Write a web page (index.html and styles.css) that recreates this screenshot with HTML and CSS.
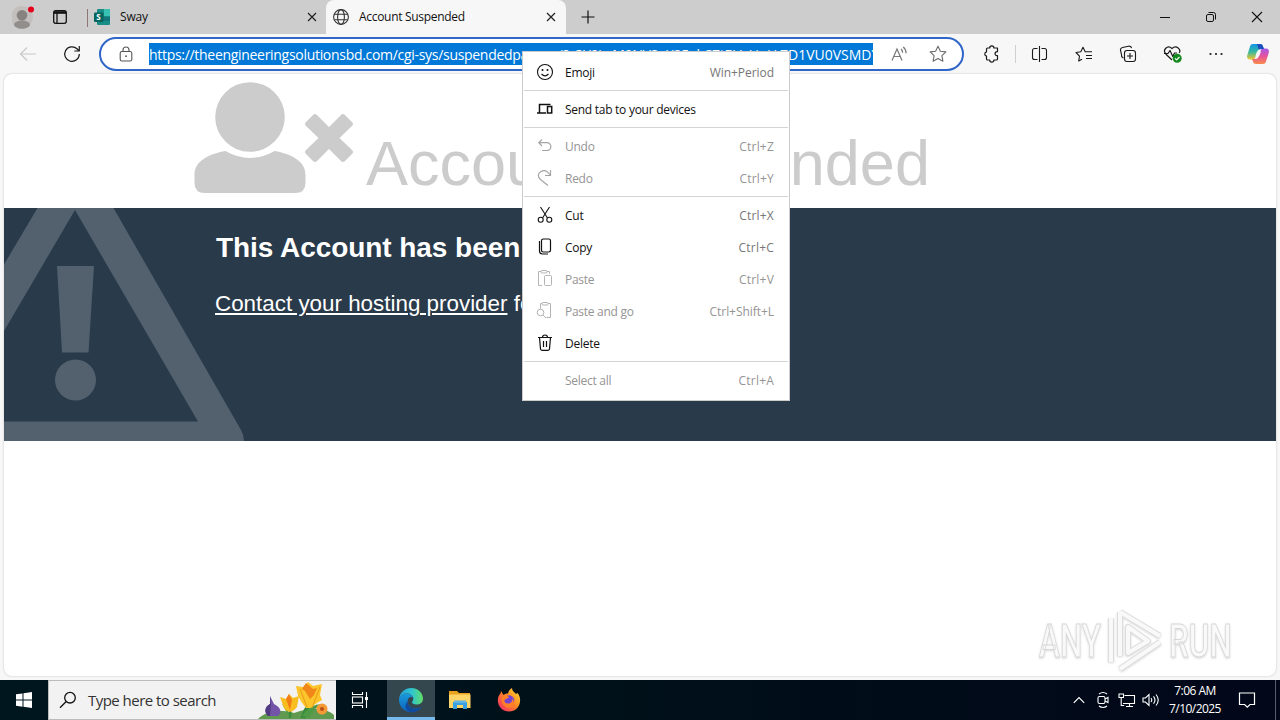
FILE: index.html
```html
<!DOCTYPE html>
<html lang="en">
<head>
<meta charset="utf-8">
<title>Account Suspended</title>
<link rel="stylesheet" href="styles.css">
</head>
<body>
<div class="tabstrip">
  <div class="profile"><svg width="24" height="28" viewBox="0 0 24 28"><circle cx="10" cy="15" r="11" fill="#c2bfbd"/><circle cx="10" cy="13.300" r="5.300" fill="#858280"/><path d="M2 23c0-6 16-6 16 0-2 5-14 5-16 0z" fill="#918e8c"/><circle cx="19" cy="7.500" r="3" fill="#e3001b"/></svg></div>
  <div class="tabactions"><svg width="16" height="16" viewBox="0 0 16 16" fill="none" stroke="#111" stroke-width="1.300"><rect x="1.700" y="1.700" width="12.600" height="12.600" rx="2"/><path d="M2 3.500h12" stroke-width="2.600"/><path d="M5 4v10"/></svg></div>
  <div class="tab tab-idle">
    <svg width="16" height="16" viewBox="0 0 16 16"><path d="M4 0h11a1 1 0 0 1 1 1v14a1 1 0 0 1-1 1H4a1 1 0 0 1-1-1V1a1 1 0 0 1 1-1z" fill="#178d86"/><path d="M10 0h5a1 1 0 0 1 1 1v6h-6z" fill="#39c2b4"/><path d="M3 8h13v4H3z" fill="#12777a"/><rect y="3.500" width="9.500" height="9.500" rx="1" fill="#06655f"/><text x="2.200" y="11.200" class="sway-letter">S</text></svg>
    <span class="tab-title">Sway</span>
    <svg class="close" width="10" height="10" viewBox="0 0 10 10"><path d="M1 1l8 8M9 1l-8 8" stroke="#222" stroke-width="1.200"/></svg>
  </div>
  <div class="tab tab-active">
    <svg width="16" height="16" viewBox="0 0 16 16" fill="none" stroke="#333" stroke-width="1.100"><circle cx="8" cy="8" r="7.400"/><ellipse cx="8" cy="8" rx="3.400" ry="7.400"/><path d="M1.300 5.200h13.400M1.300 10.800h13.400"/></svg>
    <span class="tab-title">Account Suspended</span>
    <svg class="close" width="10" height="10" viewBox="0 0 10 10"><path d="M1 1l8 8M9 1l-8 8" stroke="#222" stroke-width="1.200"/></svg>
  </div>
  <svg class="newtab" width="14" height="14" viewBox="0 0 14 14"><path d="M7 .5v13M.5 7h13" stroke="#111" stroke-width="1.200"/></svg>
  <div class="winctl">
    <span><svg width="12" height="12" viewBox="0 0 12 12"><path d="M1 6.500h10" stroke="#111"/></svg></span>
    <span><svg width="12" height="12" viewBox="0 0 12 12" fill="none" stroke="#111"><rect x="1.500" y="3.500" width="7" height="7" rx="1.500"/><path d="M3.500 1.500h5a2 2 0 0 1 2 2v5"/></svg></span>
    <span><svg width="12" height="12" viewBox="0 0 12 12"><path d="M1 1l10 10M11 1L1 11" stroke="#111" stroke-width="1.100"/></svg></span>
  </div>
</div>

<div class="toolbar">
  <div class="nav-back"><svg width="18" height="16" viewBox="0 0 18 16" fill="none" stroke="#c8c8c8" stroke-width="1.200"><path d="M17 8H1.500M8 1.500L1.500 8 8 14.500"/></svg></div>
  <div class="nav-reload"><svg width="18" height="18" viewBox="0 0 18 18" fill="none" stroke="#1a1a1a" stroke-width="1.200"><path d="M16.300 9A7.300 7.300 0 1 1 14 3.800L16 5.800M16.300 1v5h-5"/></svg></div>
  <div class="address">
    <svg class="lock" width="14" height="16" viewBox="0 0 14 16" fill="none" stroke="#555" stroke-width="1.100"><rect x="1.200" y="5.500" width="11.600" height="9.500" rx="1.800"/><path d="M4 5.500V4a3 3 0 0 1 6 0v1.500"/><circle cx="7" cy="10.200" r=".9" fill="#555" stroke="none"/></svg>
    <div class="url"><span class="url-head">https://theengineeringsolutionsbd.com/cgi-sys/suspendedpage.cgi?z3Y9IwM9NV8aX25ahSZtBVaUuUu</span><span class="url-tail">ZD1VU0VSMDY</span></div>
    <svg class="read" width="17" height="16" viewBox="0 0 17 16" fill="none" stroke="#777" stroke-width="1.200"><path d="M1 14.500L6 3l5 11.500M2.800 10.500h6.400M10 3c1.200 1 1.600 2.200 1.600 3.800M12.200 1c2 1.600 2.900 3.400 2.900 6.300"/></svg>
    <svg class="star" width="18" height="18" viewBox="0 0 18 18" fill="none" stroke="#6c6c6c" stroke-width="1.100" stroke-linejoin="round"><path d="M9 1.200l2.400 5 5.500.7-4 3.800 1 5.500L9 13.500l-4.900 2.700 1-5.500-4-3.800 5.500-.7z"/></svg>
  </div>
  <div class="tools">
    <span><svg class="puzzle" width="18" height="18" viewBox="0 0 18 18" fill="none" stroke="#1a1a1a" stroke-width="1.200" stroke-linejoin="round"><path d="M4.500 3h2.200a2 2 0 0 1 4.200 0h3.600v3.700c-3.300-.4-3.300 4.400 0 4V14a1 1 0 0 1-1 1h-2.600a2 2 0 0 1-4.200 0H4.500a1 1 0 0 1-1-1v-2.800a2.200 2.200 0 0 1 0-4.300V4a1 1 0 0 1 1-1z"/></svg></span>
    <i class="divider"></i>
    <span><svg width="18" height="18" viewBox="0 0 18 18" fill="none" stroke="#1a1a1a" stroke-width="1.100"><path d="M6.500 3.500h-3a2 2 0 0 0-2 2v7a2 2 0 0 0 2 2h3M10.500 3.500h3a2 2 0 0 1 2 2v7a2 2 0 0 1-2 2h-3M8.500 1v16"/></svg></span>
    <span><svg width="18" height="18" viewBox="0 0 18 18" fill="none" stroke="#1a1a1a" stroke-width="1.100" stroke-linejoin="round"><path d="M7 14.200L3.700 16l.8-4.900L1 7.500l4.800-.7L8 2.200l2.200 4.600H17M11 10.500h6M11 13.500h6"/></svg></span>
    <span><svg width="18" height="18" viewBox="0 0 18 18" fill="none" stroke="#1a1a1a" stroke-width="1.100"><path d="M4.500 13A2.500 2.500 0 0 1 2.600 10L1.500 5.500a2.500 2.500 0 0 1 2-3l6-1.300a2.500 2.500 0 0 1 3 2"/><rect x="5.500" y="5.500" width="11" height="11" rx="2.500"/><path d="M11 8v6M8 11h6"/></svg></span>
    <span><svg class="heart" width="20" height="18" viewBox="0 0 20 18" fill="none" stroke="#1a1a1a" stroke-width="1.200" stroke-linejoin="round"><path d="M9 15L3 9.200C-1 5 4.500-.5 9 3.500c4.500-4 9.500 1 7.200 4.500M1 8.500h4L7 5.500l2.800 6L11.500 8h2.500"/><circle cx="14.200" cy="13.200" r="4.500" fill="#138a20" stroke="none"/><path d="M12 13.300l1.600 1.600 2.900-3.100" stroke="#fff"/></svg></span>
    <span><svg width="16" height="4" viewBox="0 0 16 4" fill="#1a1a1a"><circle cx="2.500" cy="2" r="1.100"/><circle cx="8" cy="2" r="1.100"/><circle cx="13.500" cy="2" r="1.100"/></svg></span>
    <span class="copilot"><svg width="24" height="22" viewBox="0 0 24 22"><defs><linearGradient id="ca" x1="0" y1="0" x2="0" y2="1"><stop offset="0" stop-color="#1595e8"/><stop offset=".5" stop-color="#35b8a0"/><stop offset="1" stop-color="#f3c62e"/></linearGradient><linearGradient id="cb" x1="0" y1="0" x2="0" y2="1"><stop offset="0" stop-color="#a45ae8"/><stop offset=".5" stop-color="#e6529c"/><stop offset="1" stop-color="#fa8c48"/></linearGradient></defs><path d="M7 1h7c2 0 2.600 1 3 2.500L18 6h-3c-2 0-3 .7-3.500 2.500L9.500 14c-.6 1.700-1.200 2.500-3 2.500H4c-2.500 0-3.500-2-2.700-4.500L4 3.500C4.600 1.700 5.500 1 7 1z" fill="url(#ca)"/><path d="M17 21h-7c-2 0-2.600-1-3-2.500L6 16h3c2 0 3-.7 3.500-2.500l2-5.500c.6-1.700 1.200-2.500 3-2.500H20c2.500 0 3.500 2 2.700 4.500L20 18.500c-.6 1.800-1.500 2.500-3 2.500z" fill="url(#cb)"/><path d="M11 1h3c2 0 2.600 1 3 2.500L18 6h-3c-1 0-1.700.2-2.300.7z" fill="#204fbd"/><path d="M11 8.500h4l-2 5H9.300z" fill="#f7f7f7"/></svg></span>
  </div>
</div>

<div class="viewport">
  <div class="page">
    <div class="hero">
      <svg class="user-x" width="160" height="112" viewBox="0 0 160 112" fill="#ccc"><circle cx="56" cy="35" r="34.800"/><path d="M31.500 69q24.500 14 49 0c17 3 31 10 31 24v8q0 10-10.500 10H11q-10.500 0-10.500-10v-8c0-14 14-21 31-24z"/><path d="M119 33q2-2 4 0l12 12 12-12q2-2 4 0l7 7q2 2 0 4l-12.500 12L158 68q2 2 0 4l-7 7q-2 2-4 0l-12-12-12 12q-2 2-4 0l-7-7q-2-2 0-4l12.500-12L112 44q-2-2 0-4z"/></svg>
      <h1>Account Suspended</h1>
    </div>
    <div class="band">
      <svg class="warn" width="240" height="233" viewBox="0 0 240 233"><path fill-rule="evenodd" fill="#52616d" d="M0 56.500L33.500 0h76L237 222q3 5 3 11H0zM0 123L71 2l123 211.500H0z"/><path d="M53 58h37l-5.500 86.500H58z" fill="#52616d"/><circle cx="71.500" cy="172" r="20.500" fill="#52616d"/></svg>
      <div class="message">
        <h2>This Account has been Suspended</h2>
        <p><a>Contact your hosting provider</a> for more information.</p>
      </div>
    </div>
  </div>
</div>

<div class="taskbar">
  <div class="start"><svg width="16" height="16" viewBox="0 0 16 16" fill="#fff"><path d="M0 2.300l6.500-.9v6.200H0zM7.500 1.200L16 0v7.600H7.500zM0 8.500h6.500v6.200L0 13.800zM7.500 8.500H16V16l-8.500-1.200z"/></svg></div>
  <div class="search">
    <svg width="18" height="18" viewBox="0 0 18 18" fill="none" stroke="#111" stroke-width="1.300"><circle cx="11" cy="6.700" r="5.300"/><path d="M7.200 10.500L1 16.700"/></svg>
    <span>Type here to search</span>
    <svg class="flowers" width="80" height="38" viewBox="0 0 80 38"><path d="M2 38c8-8 22-10 36-6 16-6 32-5 40 2v4z" fill="#5f9a4f"/><path d="M31 20q4 7 3 17M56 20q-8 8-10 17M53 20q0 10-5 17" stroke="#3c8a3c" stroke-width="2.500" fill="none"/><path d="M46 35q8-12 20-12-8 4-13 14M34 37q-2-10-8-14" fill="#4f9b45"/><path d="M14 15l4 8c6 3 9 8 4 12H12c-5-5-2-10 2-12z" fill="#7354a8"/><path d="M14 15l1 9-1 11h-2c-5-5-2-10 2-12z" fill="#503b80"/><path d="M24 16l6 2 3-5 4 4 6-2-2 11q-7 9-13 1z" fill="#f9bd20"/><path d="M33 13l3 6-2 10-4-11z" fill="#f07d16"/><path d="M40 5l7 1 5-5 5 4 9-2-2 11 2 5q-9 5-11 8h-5q-5-6-8-12z" fill="#fbc52b"/><path d="M50 2l7 6 4-1-3 7-4 4-5-8-3-2z" fill="#f08718"/><path d="M44 8l7 18M64 6l-8 21" stroke="#e99a16" fill="none"/><circle cx="66" cy="28" r="5.500" fill="#f69a38"/><circle cx="66" cy="28" r="2" fill="#b94d18"/></svg>
  </div>
  <div class="app"><svg width="18" height="18" viewBox="0 0 18 18" fill="none" stroke="#fff" stroke-width="1.100"><path d="M1.500 1v2.500h10V1M1.500 17v-2.500h10V17M15.500 1v16"/><rect x="1.500" y="6" width="10" height="6"/><path d="M14 6h3v3h-3z" fill="#fff" stroke="none"/></svg></div>
  <div class="app app-active"><svg width="26" height="26" viewBox="0 0 26 26"><defs><linearGradient id="ea" x1="0" y1="0" x2="1" y2="0"><stop offset="0" stop-color="#249fdc"/><stop offset=".55" stop-color="#30c6ce"/><stop offset="1" stop-color="#62dc67"/></linearGradient><linearGradient id="eb" x1="0" y1="0" x2="0" y2="1"><stop offset="0" stop-color="#1b9bdc"/><stop offset="1" stop-color="#0b62bc"/></linearGradient></defs><path d="M1 12C2 5 7 1 13 1c7 0 12 5 12 10.500 0 4-3 6-6.500 6-3 0-4.500-1-4.500-2.200 0-1 1.300-1.300 1.300-3.600C15.300 8.500 12 6.500 8.500 6.500 5 6.500 2.500 8.500 1 12z" fill="url(#ea)"/><path d="M1 12c1.500-4 4.500-5.700 8-5.500 3.500.2 5.500 2.200 6 4-3-1.500-5.500.5-5.500 4 0 5 5 8.500 11 6.500 1-.3 2-.6 2.500-.3C21 23.500 17 25.500 13 25.300 6 25 .5 19 1 12z" fill="url(#eb)"/><path d="M9.500 14.500c0 5 5 8.500 11 6.500 1-.3 2-.6 2.500-.3C21 23.500 17 25.500 13 25.300c-5-.8-7.500-7-3.500-10.800z" fill="#11499b"/></svg></div>
  <div class="app"><svg width="22" height="20" viewBox="0 0 22 20"><path d="M0 1h8l2 2h11v4H0z" fill="#e9a21b"/><path d="M0 4.500h21.500V18H0z" fill="#fcd468"/><path d="M4 19v-7h14v7h-4v-4H8v4z" fill="#3a9fe0"/><path d="M5 10.500h12V13H5z" fill="#5fb4e0"/></svg></div>
  <div class="app"><svg width="24" height="24" viewBox="0 0 24 24"><defs><linearGradient id="fa" x1="1" y1="0" x2="0" y2="1"><stop offset="0" stop-color="#ffe438"/><stop offset=".45" stop-color="#ff8a22"/><stop offset="1" stop-color="#f21f72"/></linearGradient></defs><path d="M4 3l2.500 4C8 5.700 9.500 5.500 11 5.500 11.500 3 13 1 15 0c0 3 2.500 4 4 6l1.500-1c2 2.500 3 5 2.500 8.500C22.500 19.500 18 23.500 12 23.500S1 19 .8 12.500C.8 9 2 7 3.500 5.500z" fill="url(#fa)"/><circle cx="12" cy="12.500" r="5.200" fill="#7642d2"/><path d="M5 8c3-1.500 5-.5 7 1-1 2-4 1.500-4.500 3.500C7 14 9 16 12 15.500c3-.4 3.500-3 3-5 3 3 2.500 8-2 9-6 1-9.500-5-8-11.500z" fill="#ff8126"/></svg></div>
  <div class="tray">
    <span><svg width="12" height="8" viewBox="0 0 12 8" fill="none" stroke="#fff" stroke-width="1.200"><path d="M.8 6.800L6 1.600l5.200 5.200"/></svg></span>
    <span><svg width="14" height="18" viewBox="0 0 14 18" fill="none" stroke="#fff" stroke-width="1.100"><rect x="2" y="5.500" width="7" height="7" rx="1.500"/><path d="M9 8l3-1.500v5L9 10M3 3q4-3 8 0M3 15q4 3 8 0"/></svg></span>
    <span><svg width="18" height="16" viewBox="0 0 18 16" fill="none" stroke="#fff" stroke-width="1.100"><path d="M6.500 3.500h10v8H5M8 14.500h7M11.500 11.500v3M1 2h4.500v3.500H1zM3.200 5.500v8h3"/></svg></span>
    <span><svg width="18" height="14" viewBox="0 0 18 14" fill="none" stroke="#fff" stroke-width="1.100"><path d="M1 5h2.500L7 1.500v11L3.500 9H1zM9 5q1.500 2 0 4M11.500 3.300q3 3.700 0 7.400M14 1.500q4.500 5.500 0 11"/></svg></span>
    <div class="clock"><div>7:06 AM</div><div>7/10/2025</div></div>
    <span class="notify"><svg width="18" height="18" viewBox="0 0 18 18" fill="none" stroke="#fff" stroke-width="1.200"><path d="M1.500 2h15v11.500H12l-2.700 2.700-2.700-2.700H1.500z"/></svg></span>
    <i class="desktop-edge"></i>
  </div>
</div>

<div class="menu">
  <div class="item"><svg width="18" height="18" viewBox="0 0 18 18" fill="none" stroke="#111" stroke-width="1.100"><circle cx="9" cy="9" r="7.500"/><path d="M5.500 11q3.500 3.700 7 0"/><circle cx="6.500" cy="7" r="1" fill="#111" stroke="none"/><circle cx="11.500" cy="7" r="1" fill="#111" stroke="none"/></svg><span>Emoji</span><kbd class="wide">Win+Period</kbd></div>
  <hr>
  <div class="item"><svg width="18" height="18" viewBox="0 0 18 18" fill="none" stroke="#111" stroke-width="1.500"><path d="M14.500 4.500H3.500v8M1 13h9"/><rect x="11.500" y="6.500" width="4.200" height="6.500"/></svg><span>Send tab to your devices</span></div>
  <hr>
  <div class="item off"><svg width="18" height="18" viewBox="0 0 18 18" fill="none" stroke="#a4a4a4" stroke-width="1.200"><path d="M6 2.500L2.800 5.700 6 9M3 5.700h8a3.900 3.900 0 0 1 0 7.800H6"/></svg><span>Undo</span><kbd>Ctrl+Z</kbd></div>
  <div class="item off"><svg width="18" height="18" viewBox="0 0 18 18" fill="none" stroke="#a4a4a4" stroke-width="1.200"><path d="M14.500 1v5.500H9M14 6Q10-.5 5 2.500C1 5 2 8 4.500 10.500L12 16.500"/></svg><span>Redo</span><kbd>Ctrl+Y</kbd></div>
  <hr>
  <div class="item"><svg width="18" height="18" viewBox="0 0 18 18" fill="none" stroke="#111" stroke-width="1.100"><path d="M4.500 1l7 11M13.500 1l-7 11"/><circle cx="4.700" cy="13.700" r="2.500"/><circle cx="13.300" cy="13.700" r="2.500"/></svg><span>Cut</span><kbd>Ctrl+X</kbd></div>
  <div class="item"><svg width="18" height="18" viewBox="0 0 18 18" fill="none" stroke="#111" stroke-width="1.200"><rect x="5.500" y="1" width="9" height="13" rx="1.700"/><path d="M3.500 3V13a3 3 0 0 0 3 3H12"/></svg><span>Copy</span><kbd>Ctrl+C</kbd></div>
  <div class="item off"><svg width="18" height="18" viewBox="0 0 18 18" fill="none" stroke="#b4b4b4"><path d="M6 15.500H2.500v-14H5M11 1.500h2.500V4"/><rect x="5" y=".5" width="6" height="2.500" rx="1"/><rect x="8.500" y="5.500" width="7" height="10" rx="1"/></svg><span>Paste</span><kbd>Ctrl+V</kbd></div>
  <div class="item off"><svg width="18" height="18" viewBox="0 0 18 18" fill="none" stroke="#b4b4b4"><path d="M4.500 7V1.500H6M12 1.500h2.500v14h-4"/><rect x="6" y=".5" width="6" height="2.500" rx="1"/><circle cx="4.500" cy="10.500" r="3.300"/><path d="M7 13L10 16"/></svg><span>Paste and go</span><kbd class="wide">Ctrl+Shift+L</kbd></div>
  <div class="item"><svg width="18" height="18" viewBox="0 0 18 18" fill="none" stroke="#111" stroke-width="1.200"><path d="M2 3.500h14M6.500 3.500a2.500 2.500 0 0 1 5 0M3.500 3.500l1 11.500a1.500 1.500 0 0 0 1.500 1.300h6a1.500 1.500 0 0 0 1.500-1.300l1-11.500M7.500 7v6M10.500 7v6"/></svg><span>Delete</span></div>
  <hr>
  <div class="item off"><svg width="18" height="18" viewBox="0 0 18 18"></svg><span>Select all</span><kbd>Ctrl+A</kbd></div>
</div>

<div class="watermark">
  <span>ANY</span>
  <svg width="60" height="64" viewBox="0 0 60 64" fill="none" stroke-linejoin="round"><g stroke="#dcdcdc" stroke-width="6"><path d="M14 4L54 28M14 4v44M14 61L54 34M5 10v44M22 19v26l20-12z"/></g><g stroke="#f9f9f9" stroke-width="4"><path d="M14 4L54 28M14 4v44M14 61L54 34M5 10v44M22 19v26l20-12z"/></g></svg>
  <span>RUN</span>
</div>
</body>
</html>
```
FILE: styles.css
```css
* { box-sizing: border-box; }
body {
  margin: 0; width: 1280px; height: 720px; overflow: hidden; position: relative;
  display: flex; flex-direction: column; background: #f7f7f7;
  font: 12px/16px "Open Sans", "Noto Sans", sans-serif; color: #111;
}
svg { display: block; flex: none; }

.tabstrip { height: 34px; background: #cdcdcd; display: flex; align-items: center; }
.profile { width: 36px; padding-left: 12px; margin-top: -2px; }
.tabactions { width: 51px; padding-left: 16px; height: 16px; }
.tab { display: flex; align-items: center; height: 34px; }
.tab-title { margin-left: 10px; flex: 1; letter-spacing: -.3px; }
.tab-idle { width: 239px; padding: 0 9px 0 7px; background: linear-gradient(#8d7777, #8d7777) 0 9px / 1px 18px no-repeat; }
.tab-active { width: 240px; padding: 0 10px 0 7px; background: #f7f7f7; border-radius: 8px 8px 0 0; }
.tab-idle .tab-title { letter-spacing: -.15px; }
.sway-letter { font: bold 8px "Open Sans", sans-serif; fill: #fff; }
.newtab { margin-left: 15px; }
.winctl { margin-left: auto; display: flex; }
.winctl span { width: 46px; display: flex; justify-content: center; }

.toolbar { height: 40px; display: flex; align-items: center; }
.nav-back { width: 55px; padding-left: 19px; }
.nav-reload { width: 44px; padding-left: 8px; }
.address { width: 865px; height: 34px; border: 2px solid #2f66c8; border-radius: 17px; background: #fff; display: flex; align-items: center; padding-left: 18px; }
.url { margin-left: 16px; width: 724px; height: 22px; background: #0078d7; color: #fff; display: flex; overflow: hidden; white-space: nowrap; font-size: 14px; line-height: 23px; }
.url-head { width: 631px; flex: none; overflow: hidden; letter-spacing: -.3px; }
.url-tail { letter-spacing: 0; }
.read { margin-left: 18px; }
.star { margin-left: 21px; }
.tools { flex: 1; display: flex; align-items: center; margin-left: 5px; }
.tools span { width: 44px; display: flex; justify-content: center; }
.tools .copilot { width: 40px; }
.puzzle, .heart { margin-left: 2px; }
.divider { width: 1px; height: 18px; background: #cfcfcf; margin: 0 2px; }

.viewport { height: 606px; padding: 0 4px 4px; }
.page { height: 602px; background: #fff; border-radius: 8px; box-shadow: 0 0 2px #bbb; overflow: hidden; font-family: "Liberation Sans", Arial, sans-serif; }
.hero { height: 134px; padding: 8px 0 0 190px; display: flex; }
.hero h1 { margin: 45px 0 0 12px; font-size: 63px; line-height: 72px; font-weight: normal; color: #ccc; white-space: nowrap; }
.band { height: 233px; background: #293a4a; display: flex; }
.message { color: #fff; padding-top: 24px; margin-left: -29px; }
.message h2 { font-size: 28px; line-height: 32px; margin: 0 0 0 1px; letter-spacing: -.06px; }
.message p { font-size: 22.400px; line-height: 26px; margin: 27px 0 0; }
.message a { text-decoration: underline; text-decoration-thickness: 2px; text-underline-offset: 2px; }

.taskbar { height: 40px; display: flex; background: linear-gradient(90deg, #00161e, #001019 50%, #020719); }
.start { width: 48px; display: flex; align-items: center; justify-content: center; }
.search { width: 288px; background: #f2f2f2; border: 1px solid #bbb; border-right: 0; display: flex; align-items: center; padding-left: 10px; }
.search span { margin-left: 11px; flex: 1; font-size: 15px; letter-spacing: -.53px; color: #333; white-space: nowrap; }
.app { width: 49px; display: flex; align-items: center; justify-content: center; }
.search + .app { width: 51px; padding-right: 3px; }
.app-active { width: 48px; background: #34464e; border-bottom: 3px solid #76b9ed; padding-top: 3px; }
.tray { margin-left: auto; display: flex; align-items: center; color: #fff; }
.tray span { width: 24px; display: flex; justify-content: center; }
.clock { width: 62px; padding-left: 2px; text-align: center; line-height: 18px; letter-spacing: -.55px; }
.tray .notify { width: 44px; }
.desktop-edge { width: 1px; height: 40px; background: #57606b; margin: 0 4px 0 6px; }

.menu { position: absolute; left: 522px; top: 51px; width: 268px; height: 350px; background: #fff; border: 1px solid #ccc; padding: 4px 1px; }
.menu hr { border: 0; height: 1px; margin: 2px 0; background: #d4d4d4; }
.item { height: 32px; display: flex; align-items: center; padding: 0 14px 0 12px; letter-spacing: -.27px; }
.item span { margin-left: 11px; flex: 1; padding-top: 2px; }
.item kbd { font: inherit; color: #767676; padding-top: 2px; letter-spacing: .2px; }
.item kbd.wide { letter-spacing: -.05px; }
.item.off, .item.off kbd { color: #949494; }

.watermark { position: absolute; left: 1039px; top: 608px; width: 200px; height: 64px; display: flex; align-items: center; font: 500 47px/67px Roboto, sans-serif; color: #f9f9f9; -webkit-text-stroke: 1px #d8d8d8; filter: drop-shadow(0 1px 1px #d8d8d8); }
.watermark span { width: 67px; transform: scaleX(.67); transform-origin: left; white-space: nowrap; }
.watermark svg { margin-right: 3px; }
```
